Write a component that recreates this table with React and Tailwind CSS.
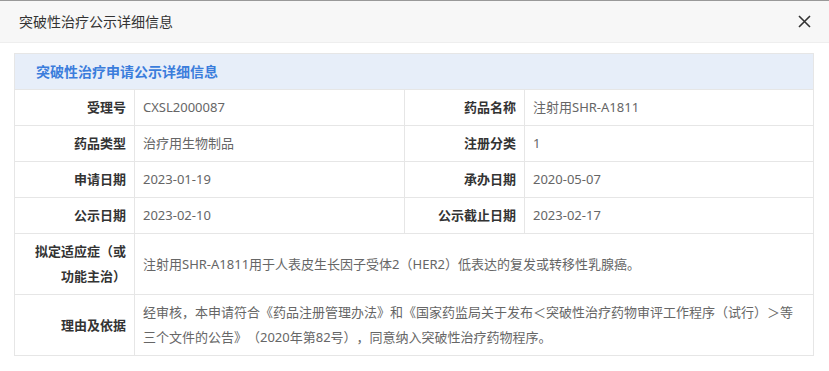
const rows = [
  ['受理号', 'CXSL2000087', '药品名称', '注射用SHR-A1811'],
  ['药品类型', '治疗用生物制品', '注册分类', '1'],
  ['申请日期', '2023-01-19', '承办日期', '2020-05-07'],
  ['公示日期', '2023-02-10', '公示截止日期', '2023-02-17'],
];

const wide = [
  ['拟定适应症（或功能主治）', '注射用SHR-A1811用于人表皮生长因子受体2（HER2）低表达的复发或转移性乳腺癌。'],
  ['理由及依据', '经审核，本申请符合《药品注册管理办法》和《国家药监局关于发布＜突破性治疗药物审评工作程序（试行）＞等三个文件的公告》（2020年第82号），同意纳入突破性治疗药物程序。'],
];

function Label({ children }) {
  return (
    <div className="flex items-center justify-end text-right border-r border-b border-[#e6e6e6] pl-[15px] pr-[8px] py-[5px] leading-[25px] font-bold text-[#333]">
      {children}
    </div>
  );
}

function Value({ children, span }) {
  return (
    <div className={`flex items-center border-r border-b border-[#e6e6e6] pl-[8px] pr-[12px] py-[5px] leading-[25px] text-[#666] ${span ? 'col-span-3' : ''}`}>
      {children}
    </div>
  );
}

export default function App() {
  return (
    <div
      className="w-[829px] h-[371px] bg-white border-t border-[#999] overflow-hidden [text-spacing-trim:space-all]"
      style={{ fontFamily: '"Noto Sans", "Noto Sans CJK SC", sans-serif' }}
    >
      <div className="h-[42px] bg-[#f7f7f7] border-b border-[#eee] flex items-center justify-between pl-[19px] pr-[18px]">
        <span className="text-[14px] text-[#333]">突破性治疗公示详细信息</span>
        <svg width="13" height="13" viewBox="0 0 13 13" className="text-[#333]">
          <path d="M1 1L12 12M12 1L1 12" stroke="currentColor" strokeWidth="1.6" />
        </svg>
      </div>
      <div className="pt-[10px] pl-[14px]">
        <div className="w-[800px] border-l border-t border-[#e6e6e6] text-[13px]">
          <div className="h-[36px] bg-[#e7eef9] border-r border-b border-[#e6e6e6] flex items-center pl-[21px] font-bold text-[14px] text-[#3b7ddc]">
            突破性治疗申请公示详细信息
          </div>
          <div className="grid grid-cols-[120px_270px_120px_289px]">
            {rows.map((r) => (
              <div key={r[0]} className="contents">
                <Label>{r[0]}</Label>
                <Value>{r[1]}</Value>
                <Label>{r[2]}</Label>
                <Value>{r[3]}</Value>
              </div>
            ))}
            {wide.map((r) => (
              <div key={r[0]} className="contents">
                <Label>{r[0]}</Label>
                <Value span>{r[1]}</Value>
              </div>
            ))}
          </div>
        </div>
      </div>
    </div>
  );
}
